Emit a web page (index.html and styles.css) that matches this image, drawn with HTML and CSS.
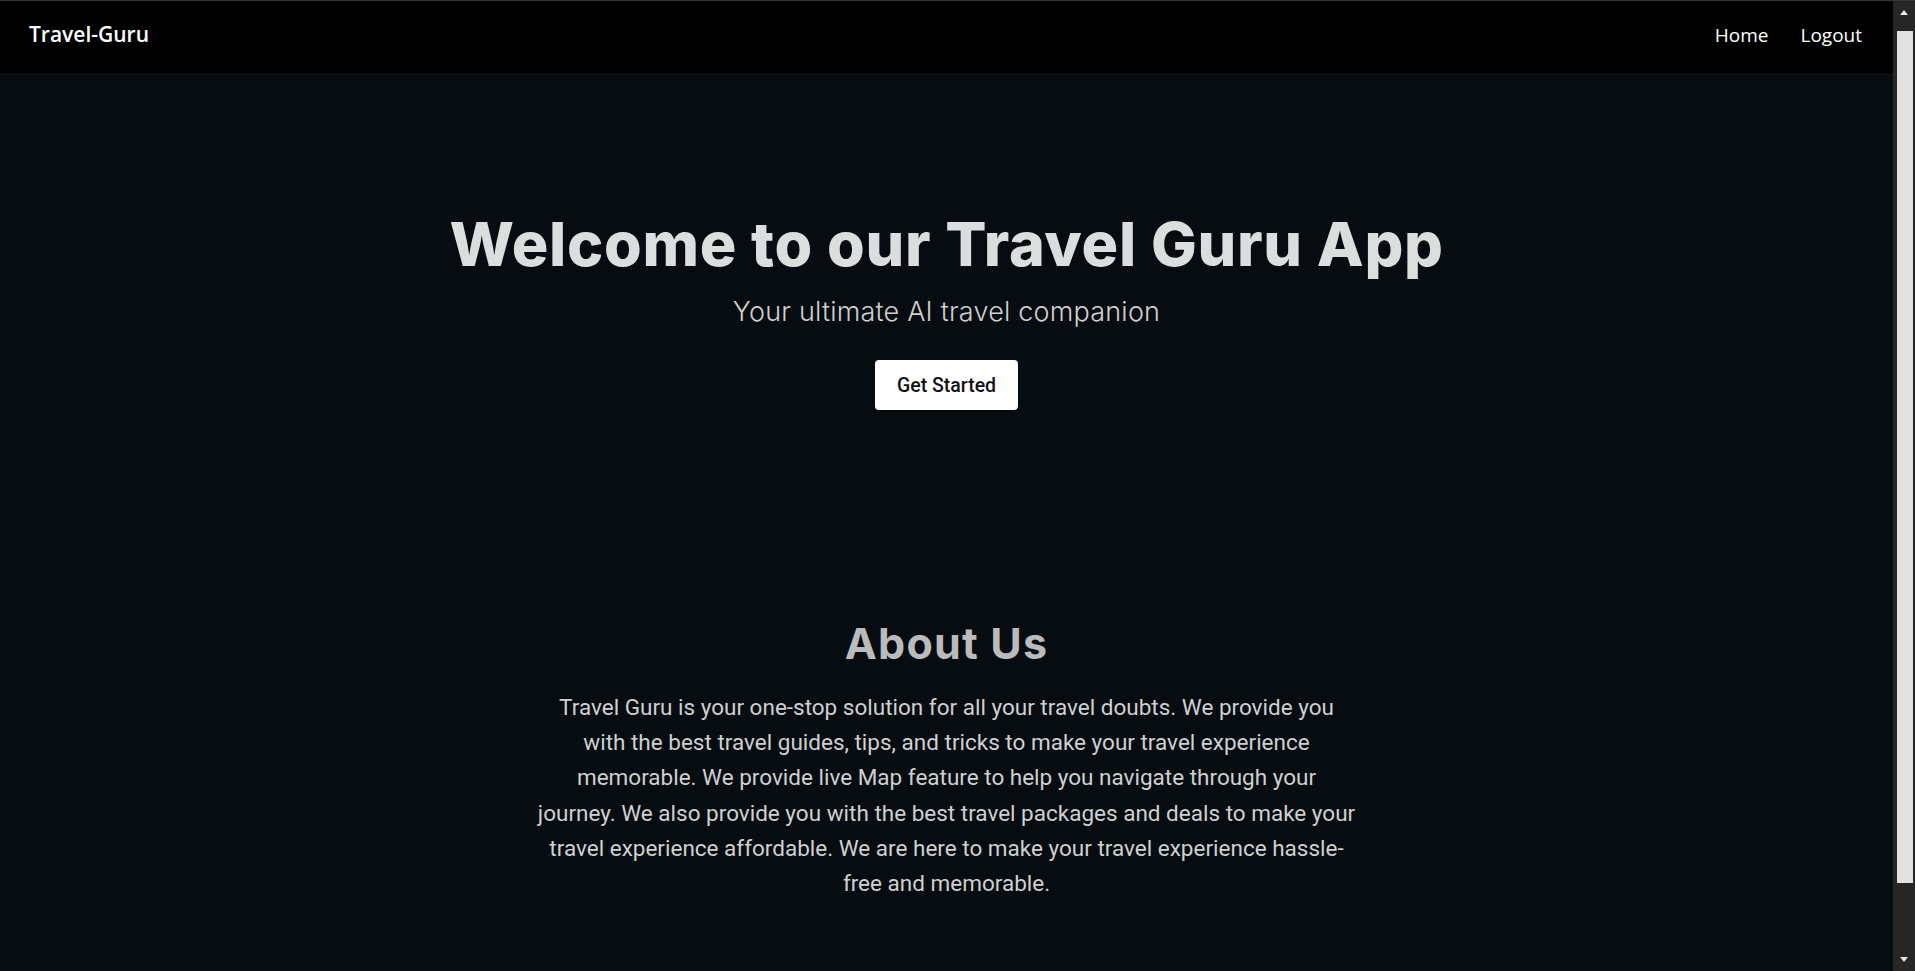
FILE: index.html
```html
<!DOCTYPE html>
<html lang="en">
<head>
<meta charset="utf-8">
<title>Travel-Guru</title>
<link rel="stylesheet" href="styles.css">
</head>
<body>
<div class="page">
  <nav class="navbar">
    <a class="brand" href="#">Travel-Guru</a>
    <ul class="nav-links">
      <li><a href="#">Home</a></li>
      <li><a href="#">Logout</a></li>
    </ul>
  </nav>
  <main>
    <section class="hero">
      <h1 class="hero-title">Welcome to our Travel Guru App</h1>
      <p class="hero-sub">Your ultimate AI travel companion</p>
      <a class="btn-start" href="#">Get Started</a>
    </section>
    <section class="about">
      <h2 class="about-title">About Us</h2>
      <p class="about-text">Travel Guru is your one-stop solution for all your travel doubts. We provide you with the best travel guides, tips, and tricks to make your travel experience memorable. We provide live Map feature to help you navigate through your journey. We also provide you with the best travel packages and deals to make your travel experience affordable. We are here to make your travel experience hassle-free and memorable.</p>
    </section>
  </main>
</div>
<div class="scrollbar" aria-hidden="true">
  <span class="sb-arrow sb-up"></span>
  <span class="sb-thumb"></span>
  <span class="sb-arrow sb-down"></span>
</div>
</body>
</html>
```

FILE: styles.css
```css
html, body {
  height: 100%;
  overflow: hidden;
}
body {
  margin: 0;
  background: #060c10;
  color: #dcdcdc;
  font-family: "Roboto", "Liberation Sans", sans-serif;
}
.page {
  margin-right: 22px;
}

/* scrollbar drawn over the right edge */
.scrollbar {
  position: fixed;
  top: 0;
  right: 0;
  bottom: 0;
  width: 22px;
  background: #262626;
  border-top: 1px solid #363636;
  box-sizing: border-box;
}
.sb-thumb {
  position: absolute;
  top: 30px;
  bottom: 88px;
  left: 4px;
  right: 2px;
  background: #e1e1e1;
}
.sb-arrow {
  position: absolute;
  left: 7px;
  width: 0;
  height: 0;
  border-left: 4.5px solid transparent;
  border-right: 4.5px solid transparent;
}
.sb-up {
  top: 9px;
  border-bottom: 5px solid #e6e6e6;
}
.sb-down {
  bottom: 9px;
  border-top: 5px solid #e6e6e6;
}

.navbar {
  display: flex;
  align-items: center;
  justify-content: space-between;
  height: 73px;
  box-sizing: border-box;
  border-top: 1px solid #363636;
  background: #000;
  padding: 0 31px 0 29px;
}
.brand {
  color: #fff;
  text-decoration: none;
  font-family: "Open Sans", "Noto Sans", sans-serif;
  font-weight: 600;
  font-size: 21px;
  margin-top: -7px;
}
.nav-links {
  display: flex;
  gap: 32px;
  list-style: none;
  margin: -5px 0 0;
  padding: 0;
}
.nav-links a {
  color: #fff;
  text-decoration: none;
  font-family: "Open Sans", "Noto Sans", sans-serif;
  font-size: 19px;
}

.hero {
  display: flex;
  flex-direction: column;
  align-items: center;
  padding-top: 135px;
}
.hero-title {
  margin: 0;
  font-family: "Inter", sans-serif;
  font-weight: 800;
  font-size: 61px;
  line-height: 1.2;
  color: #dcdddd;
  letter-spacing: 0.7px;
}
.hero-sub {
  margin: 14px 0 0;
  font-family: "Inter", sans-serif;
  font-weight: 300;
  font-size: 27px;
  letter-spacing: 0.2px;
  color: #cfd0d0;
}
.btn-start {
  margin-top: 32px;
  display: inline-flex;
  align-items: center;
  justify-content: center;
  width: 143px;
  height: 50px;
  box-sizing: border-box;
  background: #fff;
  border-radius: 4px;
  color: #111;
  text-decoration: none;
  font-family: "Roboto", sans-serif;
  font-weight: 500;
  font-size: 19.5px;
}

.about {
  display: flex;
  flex-direction: column;
  align-items: center;
  padding-top: 208px;
}
.about-title {
  margin: 0;
  font-family: "Inter", sans-serif;
  font-weight: 700;
  font-size: 43px;
  line-height: 1.2;
  letter-spacing: 1.2px;
  color: #b9bbbc;
}
.about-text {
  margin: 20px 0 0;
  max-width: 820px;
  text-align: center;
  font-family: "Roboto", sans-serif;
  font-size: 22.5px;
  line-height: 1.57;
  color: #cfd0d1;
}
```
